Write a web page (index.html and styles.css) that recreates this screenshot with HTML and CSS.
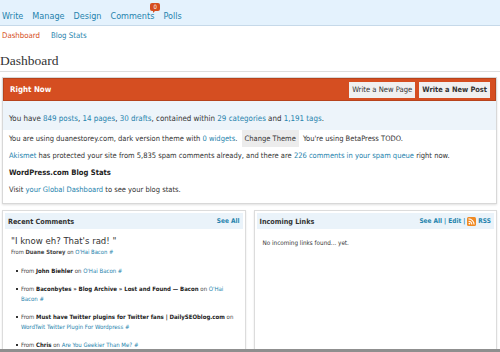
FILE: index.html
```html
<!DOCTYPE html>
<html>
<head>
<meta charset="utf-8">
<link rel="stylesheet" href="styles.css">
</head>
<body>
<nav class="topnav">
  <a>Write</a>
  <a>Manage</a>
  <a>Design</a>
  <a class="has-badge">Comments<span class="badge">0</span></a>
  <a>Polls</a>
</nav>
<nav class="subnav">
  <a class="current">Dashboard</a>
  <a>Blog Stats</a>
</nav>
<h2 class="title">Dashboard</h2>

<section class="rightnow">
  <header class="rn-head">
    <h3>Right Now</h3>
    <div class="rn-buttons">
      <button class="btn">Write a New Page</button>
      <button class="btn strong">Write a New Post</button>
    </div>
  </header>
  <p class="row first">You have <a>849 posts</a>, <a>14 pages</a>, <a>30 drafts</a>, contained within <a>29 categories</a> and <a>1,191 tags</a>.</p>
  <p class="row">You are using duanestorey.com, dark version theme with <a>0 widgets</a>. <span class="gbtn">Change Theme</span> You're using BetaPress TODO.</p>
  <p class="row"><a>Akismet</a> has protected your site from 5,835 spam comments already, and there are <a>226 comments in your spam queue</a> right now.</p>
  <h4 class="sub">WordPress.com Blog Stats</h4>
  <p class="row">Visit <a>your Global Dashboard</a> to see your blog stats.</p>
</section>

<div class="widgets">
  <section class="widget">
    <header class="w-head"><h3>Recent Comments</h3><span class="w-links"><a>See All</a></span></header>
    <div class="w-body">
      <p class="quote">"I know eh? That's rad! "</p>
      <p class="from">From <b>Duane Storey</b> on <a>O'Hai Bacon #</a></p>
      <ul class="clist">
        <li>From <b>John Biehler</b> on <a>O'Hai Bacon #</a></li>
        <li>From <b>Baconbytes » Blog Archive » Lost and Found — Bacon</b> on <a>O'Hai Bacon #</a></li>
        <li>From <b>Must have Twitter plugins for Twitter fans | DailySEOblog.com</b> on <a>WordTwit Twitter Plugin For Wordpress #</a></li>
        <li>From <b>Chris</b> on <a>Are You Geekier Than Me? #</a></li>
      </ul>
    </div>
  </section>
  <section class="widget">
    <header class="w-head"><h3>Incoming Links</h3><span class="w-links"><a>See All</a> | <a>Edit</a> | <svg class="rss" width="9" height="9" viewBox="0 0 9 9"><rect width="9" height="9" rx="1.5" fill="#f08a24"/><circle cx="2.4" cy="6.6" r="0.9" fill="#fff"/><path d="M1.5 4.2a3.3 3.3 0 0 1 3.3 3.3M1.5 1.9a5.6 5.6 0 0 1 5.6 5.6" stroke="#fff" stroke-width="1.1" fill="none"/></svg> <a>RSS</a></span></header>
    <div class="w-body">
      <p class="nolinks">No incoming links found... yet.</p>
    </div>
  </section>
</div>
<div class="frame-bottom"></div>
</body>
</html>
```
FILE: styles.css
```css
* { box-sizing: border-box; }
html, body { margin: 0; padding: 0; }
body {
  width: 500px;
  height: 352px;
  overflow: hidden;
  position: relative;
  background: #fff;
  font-family: "DejaVu Sans Condensed", "DejaVu Sans", sans-serif;
  color: #333;
}
a { color: #2583ad; }

.topnav {
  height: 26px;
  background: #e4f2fd;
  border-bottom: 1px solid #c6d9e9;
  display: flex;
  align-items: center;
  gap: 9px;
  padding: 6px 0 0 2px;
  font-size: 9px;
}
.topnav a { text-decoration: none; color: #2583ad; }
.has-badge { position: relative; }
.badge {
  position: absolute;
  left: 40px;
  top: -8px;
  background: #d54e21;
  color: #fff;
  font-size: 6px;
  line-height: 8px;
  padding: 0 3px;
  border-radius: 2px;
}
.badge::after {
  content: "";
  position: absolute;
  left: 3px;
  bottom: -2px;
  border-left: 2px solid #d54e21;
  border-bottom: 2px solid transparent;
}

.subnav {
  display: flex;
  gap: 11px;
  padding: 5px 0 0 2px;
  height: 21px;
  font-size: 7.8px;
}
.subnav a { text-decoration: none; color: #2583ad; }
.subnav a.current { color: #d54e21; }

.title {
  margin: 0 0 5px;
  font-family: "Liberation Serif", serif;
  font-weight: normal;
  font-size: 13.5px;
  color: #333;
  padding: 6px 0 0 0;
  height: 25px;
  border-bottom: 1px solid #dedede;
}

.rightnow {
  margin: 0 3px 0 2px;
  border: 1px solid #d8d8d8;
  box-shadow: 0 1px 2px rgba(0,0,0,0.12);
  height: 127px;
}
.rn-head {
  background: #d54e21;
  border: 1px solid #b7431c;
  height: 23px;
  display: flex;
  align-items: center;
  justify-content: space-between;
  padding: 0 5px 0 6px;
}
.rn-head h3 {
  margin: 0;
  color: #fff;
  font-size: 7.9px;
  font-weight: bold;
}
.rn-buttons { display: flex; gap: 4px; }
.btn {
  font-family: inherit;
  border: 0;
  background: #f0f0f0;
  color: #333;
  font-size: 7.6px;
  height: 16px;
  padding: 0 3px;
  margin: 0;
}
.btn.strong { font-weight: bold; font-size: 7.4px; }

.row {
  margin: 0;
  font-size: 7.5px;
  padding: 0 6px;
  height: 17px;
  line-height: 17px;
  white-space: nowrap;
}
.row.first {
  background: #edf4fa;
  height: 29px;
  padding-top: 9px;
  font-size: 7.9px;
}
.gbtn {
  background: #ececec;
  padding: 4px 3px;
  margin: 0 2px;
}
.sub {
  margin: 0;
  font-size: 7.6px;
  font-weight: bold;
  color: #222;
  padding: 0 6px;
  height: 17px;
  line-height: 17px;
}

.widgets {
  display: flex;
  gap: 8px;
  margin: 6px 3px 0 2px;
}
.widget {
  flex: 1;
  border: 1px solid #dcdcdc;
  height: 150px;
  box-shadow: 0 1px 2px rgba(0,0,0,0.1);
}
.w-head {
  margin: 2px 2px 0;
  background: #eaf3fa;
  height: 16px;
  display: flex;
  align-items: center;
  justify-content: space-between;
  padding: 0 3px;
}
.w-head h3 { margin: 0; font-size: 7.2px; font-weight: bold; color: #333; }
.w-links { font-size: 6.5px; color: #2583ad; display: flex; align-items: center; gap: 2px; font-weight: bold; }
.w-links a { text-decoration: none; }
.rss { display: block; }
.w-body { padding: 6px 8px; }
.quote { margin: 0; font-size: 9.5px; color: #333; line-height: 12px; }
.from { margin: 1px 0 0; font-size: 5.8px; color: #444; line-height: 9px; }
.from a, .clist a { text-decoration: none; }
.clist {
  margin: 9px 0 0;
  padding: 0 0 0 5px;
  list-style: none;
  font-size: 6px;
  line-height: 10px;
  color: #444;
}
.clist li { position: relative; padding-left: 5px; margin-bottom: 8px; }
.clist li::before {
  content: "";
  position: absolute;
  left: 0;
  top: 4px;
  width: 2px;
  height: 2px;
  background: #333;
}
.clist b { color: #222; }
.nolinks { margin: 4px 0 0; font-size: 6.3px; color: #333; }

.frame-bottom {
  position: absolute;
  left: 0; right: 0; bottom: 0;
  height: 3px;
  background: #8f8f8f;
}
```
